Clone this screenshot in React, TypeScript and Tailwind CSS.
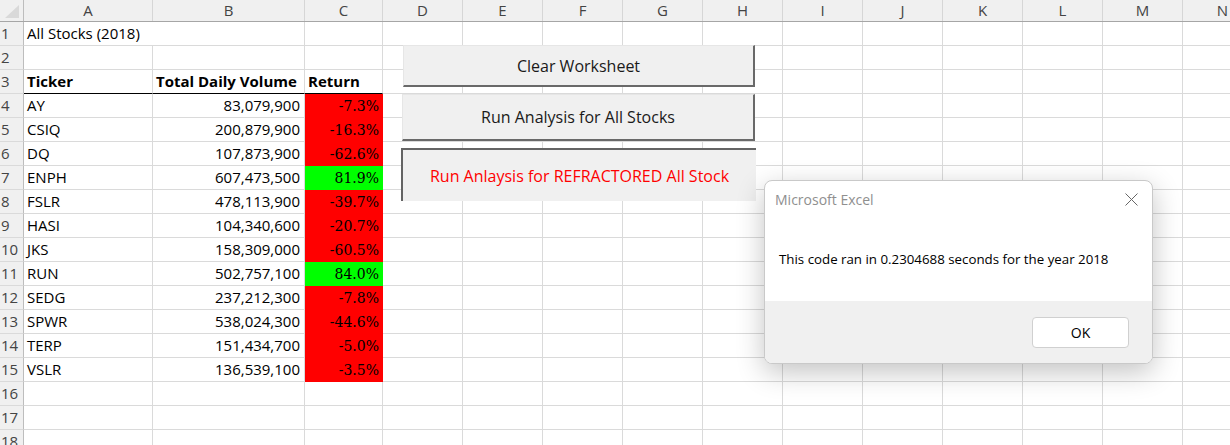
const cols = [
  { l: "A", w: "w-[129px]" },
  { l: "B", w: "w-[152px]" },
  { l: "C", w: "w-[78px]" },
  { l: "D", w: "w-[80px]" },
  { l: "E", w: "w-[80px]" },
  { l: "F", w: "w-[80px]" },
  { l: "G", w: "w-[80px]" },
  { l: "H", w: "w-[80px]" },
  { l: "I", w: "w-[80px]" },
  { l: "J", w: "w-[80px]" },
  { l: "K", w: "w-[80px]" },
  { l: "L", w: "w-[80px]" },
  { l: "M", w: "w-[80px]" },
  { l: "N", w: "w-[80px]" },
];

const stocks: [string, string, string, boolean][] = [
  ["AY", "83,079,900", "-7.3%", false],
  ["CSIQ", "200,879,900", "-16.3%", false],
  ["DQ", "107,873,900", "-62.6%", false],
  ["ENPH", "607,473,500", "81.9%", true],
  ["FSLR", "478,113,900", "-39.7%", false],
  ["HASI", "104,340,600", "-20.7%", false],
  ["JKS", "158,309,000", "-60.5%", false],
  ["RUN", "502,757,100", "84.0%", true],
  ["SEDG", "237,212,300", "-7.8%", false],
  ["SPWR", "538,024,300", "-44.6%", false],
  ["TERP", "151,434,700", "-5.0%", false],
  ["VSLR", "136,539,100", "-3.5%", false],
];

const cellFont = "font-['Open_Sans',sans-serif] text-[15px] text-black";
const grid = "border-r border-b border-[#dadada]";

function Cell({
  w,
  children,
  className = "",
}: {
  w: string;
  children?: React.ReactNode;
  className?: string;
}) {
  return (
    <div className={`${w} h-full shrink-0 flex items-center whitespace-nowrap ${className}`}>
      {children}
    </div>
  );
}

function Row({ n }: { n: number }) {
  const stock = n >= 4 && n <= 15 ? stocks[n - 4] : null;
  return (
    <div className="flex h-[24px] shrink-0">
      <div className="w-[24px] h-full shrink-0 flex items-center pl-[1px] bg-[#f0f0f0] border-r border-r-[#bdbdbd] border-b border-b-[#dadada] font-['Open_Sans',sans-serif] text-[15px] text-[#444]">
        {n}
      </div>
      {cols.map((c, i) => {
        if (n === 1 && i === 0) {
          return (
            <Cell key={i} w={c.w} className={`border-b border-[#dadada] pl-[3px] ${cellFont} overflow-visible`}>
              <span className="relative z-10">All Stocks (2018)</span>
            </Cell>
          );
        }
        if (n === 3 && i < 3) {
          const label = ["Ticker", "Total Daily Volume", "Return"][i];
          return (
            <Cell key={i} w={c.w} className={`border-r border-r-[#dadada] border-b border-b-black pl-[3px] ${cellFont} font-bold`}>
              {label}
            </Cell>
          );
        }
        if (stock && i === 0) {
          return (
            <Cell key={i} w={c.w} className={`${grid} pl-[3px] ${cellFont}`}>
              {stock[0]}
            </Cell>
          );
        }
        if (stock && i === 1) {
          return (
            <Cell key={i} w={c.w} className={`${grid} justify-end pr-[4px] ${cellFont}`}>
              {stock[1]}
            </Cell>
          );
        }
        if (stock && i === 2) {
          return (
            <Cell
              key={i}
              w={c.w}
              className={`justify-end pr-[4px] font-['DejaVu_Serif',serif] text-[14px] text-black ${
                stock[3] ? "bg-[#00ff00]" : "bg-[#ff0000]"
              }`}
            >
              {stock[2]}
            </Cell>
          );
        }
        return <Cell key={i} w={c.w} className={grid} />;
      })}
    </div>
  );
}

function SheetButton({
  className,
  children,
}: {
  className: string;
  children: React.ReactNode;
}) {
  return (
    <div
      className={`absolute flex items-center justify-center bg-[#f0f0f0] font-['Open_Sans',sans-serif] text-[16px] ${className}`}
    >
      {children}
    </div>
  );
}

export default function App() {
  return (
    <div className="relative w-[1230px] h-[445px] overflow-hidden bg-white select-none">
      {/* column headers */}
      <div className="flex h-[22px] bg-[#f0f0f0] border-b border-[#a6a6a6]">
        <div className="w-[24px] h-full shrink-0 border-r border-[#bdbdbd] relative">
          <svg width={23} height={21} className="absolute left-0 top-0">
            <polygon points="5,18 19,18 19,5" fill="#d9d9d9" />
          </svg>
        </div>
        {cols.map((c) => (
          <div
            key={c.l}
            className={`${c.w} h-full shrink-0 flex items-center justify-center border-r border-[#d6d6d6] font-['Open_Sans',sans-serif] text-[15px] text-[#444]`}
          >
            {c.l}
          </div>
        ))}
      </div>

      {Array.from({ length: 18 }, (_, i) => (
        <Row key={i} n={i + 1} />
      ))}

      {/* form buttons */}
      <SheetButton className="left-[403px] top-[45px] w-[352px] h-[42px] border-t border-l border-[#e6e6e6] border-r-2 border-r-[#696969] border-b-2 border-b-[#696969] text-[#1a1a1a]">
        Clear Worksheet
      </SheetButton>
      <SheetButton className="left-[402px] top-[94px] w-[353px] h-[47px] border-t border-l border-[#e6e6e6] border-r-2 border-r-[#696969] border-b-2 border-b-[#696969] text-[#1a1a1a]">
        Run Analysis for All Stocks
      </SheetButton>
      <SheetButton className="left-[401px] top-[148px] w-[355px] h-[53px] border-t-2 border-l-2 border-[#646464] text-[#ff0000]">
        Run Anlaysis for REFRACTORED All Stock
      </SheetButton>

      {/* message box */}
      <div className="absolute left-[764px] top-[180px] w-[389px] h-[184px] flex flex-col rounded-[8px] border border-[#c9c9c9] bg-white shadow-[0_8px_28px_rgba(0,0,0,0.24)] overflow-hidden font-['Open_Sans',sans-serif]">
        <div className="h-[37px] shrink-0 flex items-center justify-between pl-[10px] pr-[14px]">
          <span className="text-[14px] text-[#8f8f8f]">Microsoft Excel</span>
          <svg width={13} height={13} viewBox="0 0 13 13">
            <path d="M0.5 0.5L12.5 12.5M12.5 0.5L0.5 12.5" stroke="#666" strokeWidth={1} fill="none" />
          </svg>
        </div>
        <div className="flex-1 flex items-center pl-[14px] text-[13.3px] text-black">
          This code ran in 0.2304688 seconds for the year 2018
        </div>
        <div className="h-[62px] shrink-0 bg-[#f0f0f0] flex items-center justify-end pr-[23px]">
          <div className="w-[97px] h-[31px] flex items-center justify-center rounded-[4px] border border-[#d0d0d0] bg-white text-[14px] text-black">
            OK
          </div>
        </div>
      </div>
    </div>
  );
}
